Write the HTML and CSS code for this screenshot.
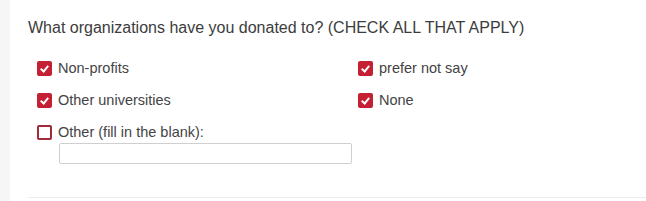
FILE: index.html
```html
<!DOCTYPE html>
<html lang="en">
<head>
    <meta charset="UTF-8">
    <title>Donations</title>
    <link rel="stylesheet" href="styles.css">
</head>
<body>
    <div class="side"></div>
    <div class="question">
        <h2 class="title">What organizations have you donated to? (CHECK ALL THAT APPLY)</h2>
        <div class="options">
            <div class="col">
                <label class="opt"><span class="box checked"></span>Non-profits</label>
                <label class="opt"><span class="box checked"></span>Other universities</label>
                <div class="other">
                    <label class="opt"><span class="box"></span>Other (fill in the blank):</label>
                    <input type="text" class="blank">
                </div>
            </div>
            <div class="col">
                <label class="opt"><span class="box checked"></span>prefer not say</label>
                <label class="opt"><span class="box checked"></span>None</label>
            </div>
        </div>
        <div class="rule"></div>
    </div>
</body>
</html>
```

FILE: styles.css
```css
* {
    box-sizing: border-box;
    margin: 0;
    padding: 0;
}

html, body {
    width: 646px;
    height: 201px;
    overflow: hidden;
}

body {
    font-family: "Liberation Sans", Arial, sans-serif;
    color: #444;
    background: #fff;
    display: flex;
}

.side {
    width: 10px;
    background: #f6f6f6;
    flex-shrink: 0;
}

.question {
    flex: 1;
    min-width: 0;
    padding: 18px 0 0 18px;
}

.title {
    font-size: 16px;
    font-weight: normal;
    line-height: 20px;
    color: #3c3c3c;
    white-space: nowrap;
}

/* options */
.options {
    display: flex;
    padding: 22px 0 0 9px;
}

.col {
    display: flex;
    flex-direction: column;
    gap: 15px;
}

.col:first-child {
    width: 321px;
    flex-shrink: 0;
}

.col:last-child {
    flex: 1;
}

.opt {
    display: flex;
    align-items: center;
    gap: 6px;
    font-size: 14.5px;
    line-height: 17px;
    color: #444;
}

.box {
    width: 15px;
    height: 15px;
    border: 2px solid #a32a3a;
    border-radius: 2px;
    background: #fff;
    position: relative;
    flex-shrink: 0;
}

.box.checked {
    background: #c41f33;
    border-color: #c41f33;
}

.box.checked::after {
    content: "";
    position: absolute;
    left: 3px;
    top: 1px;
    width: 3px;
    height: 6px;
    border: solid #fff;
    border-width: 0 2px 2px 0;
    transform: rotate(40deg);
}

.other {
    display: flex;
    flex-direction: column;
    gap: 2px;
}

.blank {
    margin-left: 22px;
    width: 293px;
    height: 21px;
    border: 1px solid #cfcfcf;
    border-radius: 2px;
    background: #fff;
}

.rule {
    margin-top: 33px;
    height: 1px;
    background: #ececec;
}
```
